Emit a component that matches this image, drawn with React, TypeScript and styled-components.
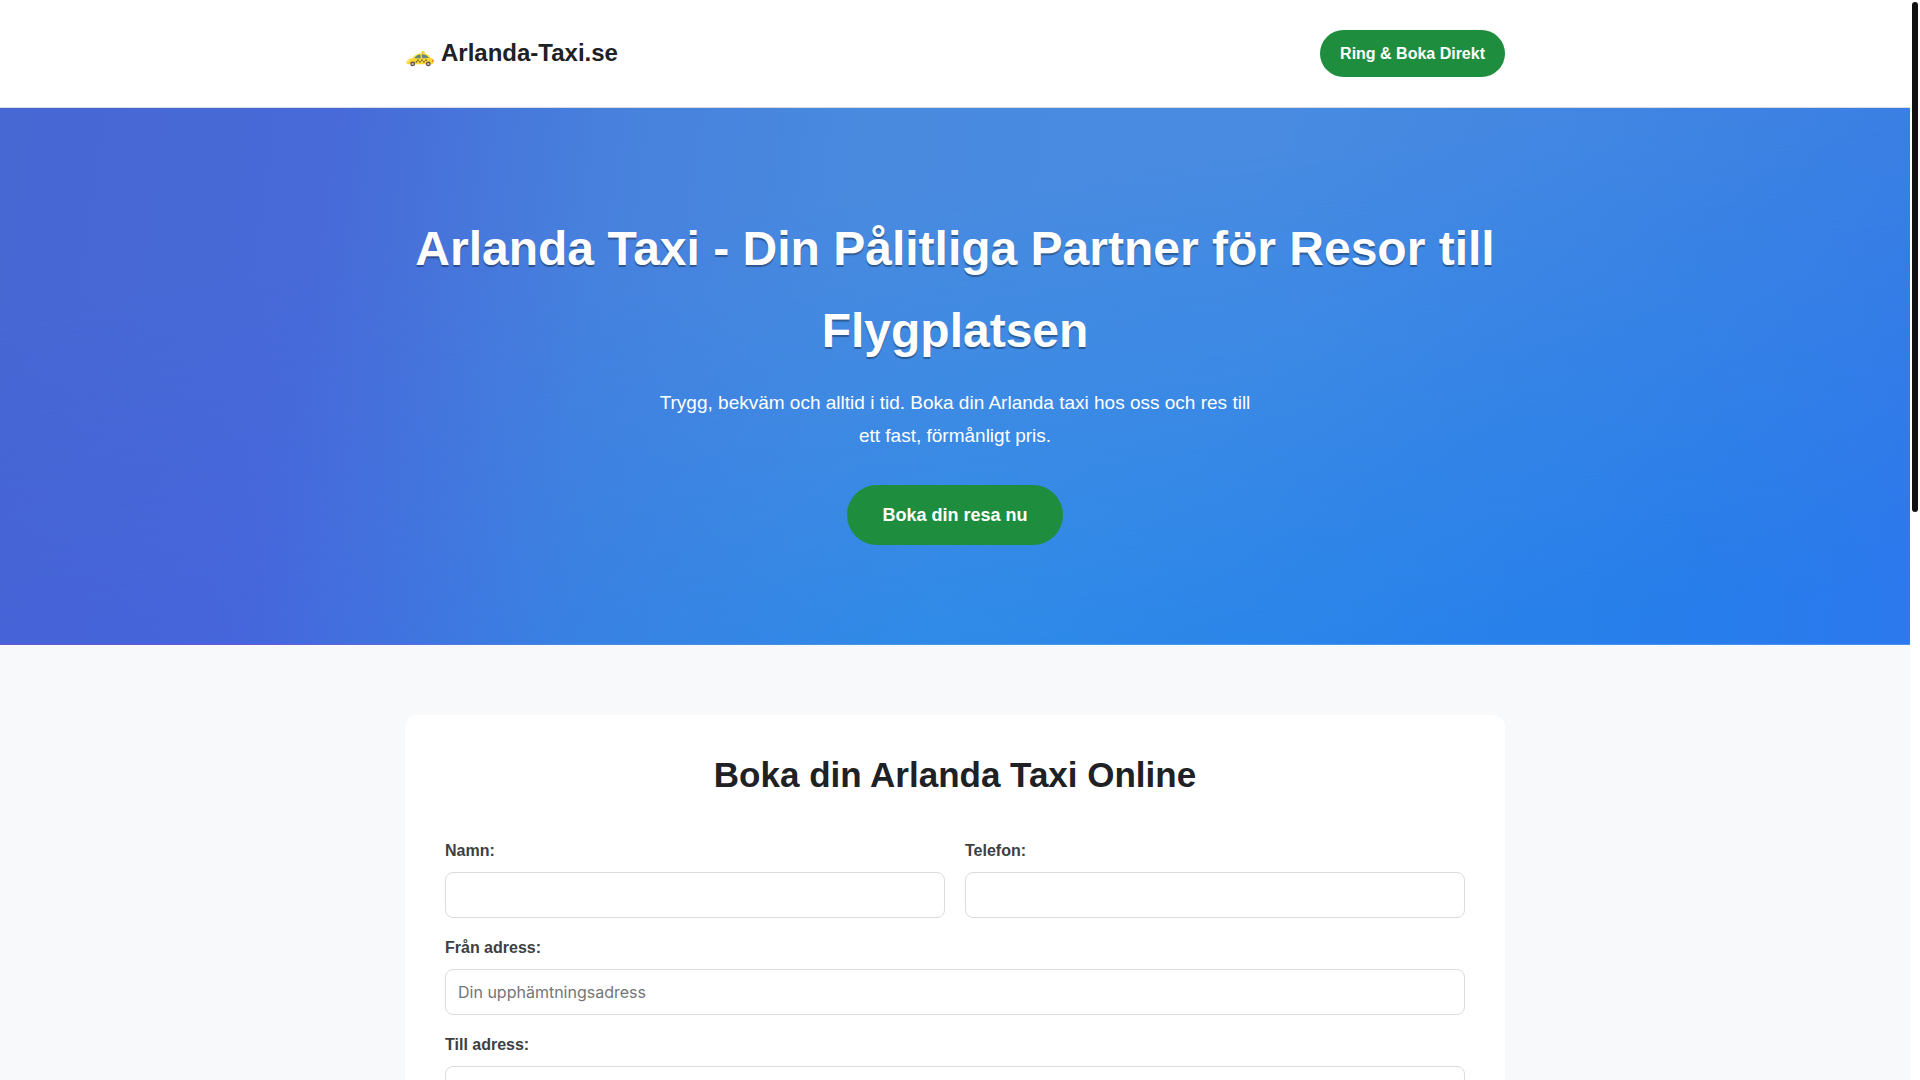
import React from 'react';
import styled, { createGlobalStyle } from 'styled-components';

const GlobalStyle = createGlobalStyle`
  *, *::before, *::after { box-sizing: border-box; }
  html { height: 100%; overflow: hidden; }
  body {
    height: 100%;
    margin: 0;
    overflow: hidden;
    background: #fff;
    color: #202124;
    font-family: "Liberation Sans", Arial, sans-serif;
    font-size: 16px;
    line-height: 27px;
  }
  #root { height: 100%; }
`;

const Viewport = styled.div`
  display: flex;
  height: 100%;
`;

const Page = styled.div`
  flex: 1;
  min-width: 0;
  height: 100%;
  overflow: hidden;
  background: #f8f9fb;
`;

const ScrollTrack = styled.div`
  width: 10px;
  padding: 2px;
  background: #fff;
`;

const ScrollThumb = styled.div`
  width: 6px;
  height: 510px;
  border-radius: 3px;
  background: #111;
`;

const Container = styled.div`
  width: 100%;
  max-width: 1100px;
  margin: 0 auto;
`;

const Header = styled.header`
  padding: 30px 0;
  background: #fff;
  border-bottom: 1px solid #dadce0;
`;

const HeaderRow = styled(Container)`
  display: flex;
  align-items: center;
  justify-content: space-between;
`;

const Logo = styled.a`
  display: flex;
  align-items: center;
  gap: 6px;
  padding-bottom: 2px;
  color: #202124;
  font-size: 24px;
  font-weight: 700;
  line-height: 41px;
  text-decoration: none;
`;

const TaxiIcon = styled.svg`
  width: 30px;
  height: 30px;
`;

const Pill = styled.a<{ $large?: boolean }>`
  display: inline-block;
  padding: ${(p) => (p.$large ? '15px 35px' : '10px 20px')};
  border-radius: ${(p) => (p.$large ? '30px' : '25px')};
  background: #1e8e3e;
  color: #fff;
  font-size: ${(p) => (p.$large ? '18px' : '16px')};
  font-weight: 700;
  line-height: ${(p) => (p.$large ? '30px' : '27px')};
  text-decoration: none;
`;

const Hero = styled.section`
  position: relative;
  isolation: isolate;
  padding: 100px 0;
  color: #fff;
  text-align: center;
  background:
    linear-gradient(90deg, #7a50cc 0%, #7a54d0 14%, #4a8ae4 30%, #4a9cea 55%, #4a90ec 100%) bottom / 100% 1px no-repeat,
    linear-gradient(95deg, #4761d8 0%, #4664de 14%, #3f72e1 22%, #3482e5 32%, #2c8be9 50%, #2a86ea 66%, #277eeb 88%, #2c79ee 100%);

  &::before {
    content: '';
    position: absolute;
    inset: 0;
    z-index: -1;
    background: linear-gradient(98deg, #4767d3 0%, #476ad8 17%, #4781dd 31%, #498adf 44%, #488be1 64%, #4084e2 86%, #3a7ee2 100%);
    mask-image: linear-gradient(173deg, #000 26%, transparent 92%);
  }
`;

const HeroTitle = styled.h1`
  margin: 0 0 14px;
  font-size: 48px;
  font-weight: 700;
  line-height: 82px;
  text-shadow: 0 2px 1px rgba(0, 0, 0, 0.35);
`;

const HeroText = styled.p`
  max-width: 600px;
  margin: 0 auto 33px;
  font-size: 19px;
  line-height: 33px;
`;

const Booking = styled.section`
  padding: 70px 0;
`;

const Card = styled(Container)`
  padding: 40px;
  border-radius: 12px;
  background: #fff;
`;

const CardTitle = styled.h2`
  margin: 0 0 42px;
  font-size: 35px;
  font-weight: 700;
  line-height: 40px;
  text-align: center;
`;

const Form = styled.form`
  display: grid;
  grid-template-columns: 1fr 1fr;
  gap: 16px 20px;
`;

const Field = styled.div<{ $wide?: boolean }>`
  display: flex;
  flex-direction: column;
  gap: 8px;
  grid-column: ${(p) => (p.$wide ? '1 / -1' : 'auto')};
`;

const Label = styled.label`
  color: #3c4043;
  font-weight: 700;
`;

const Input = styled.input`
  width: 100%;
  height: 46px;
  padding: 12px;
  border: 1px solid #dadce0;
  border-radius: 8px;
  background: #fff;
  color: #202124;
  font-family: Inter, sans-serif;
  font-size: 16px;

  &::placeholder { color: #757575; }
`;

const fields = [
  { id: 'name', label: 'Namn:', type: 'text', wide: false, placeholder: '' },
  { id: 'phone', label: 'Telefon:', type: 'tel', wide: false, placeholder: '' },
  { id: 'from', label: 'Från adress:', type: 'text', wide: true, placeholder: 'Din upphämtningsadress' },
  { id: 'to', label: 'Till adress:', type: 'text', wide: true, placeholder: '' },
];

function Taxi() {
  return (
    <TaxiIcon viewBox="0 0 30 30" aria-hidden="true">
      <rect x="16.3" y="13" width="3.400" height="3.500" rx="0.800" fill="#fbd035" />
      <path d="M1.800 22.500c.2-1.300 1.700-1.900 5.700-2.300 2.500-3 4.500-4.600 8-4.600h3c3.600 0 5 1.300 7.200 4.200 2 .5 2.800 1.600 2.800 3.600v1.300c0 1-.6 1.500-1.700 1.500H3.200c-1.200 0-1.700-.4-1.700-1.400z" fill="#fdd835" />
      <path d="M9.300 20.300c1.800-2.300 3.400-3.500 6-3.700l.5 3.700z" fill="#5f8788" />
      <path d="M16.700 16.500h1.600c2.700 0 3.900 1.200 5.500 3.600l-6.600.2z" fill="#5f8788" />
      <path d="M12.200 21.600h1.500v1.500h-1.500zM16.200 21.600h1.500v1.500h-1.500zM20.200 21.600h1.500v1.500h-1.500zM10.700 23.100h1.500v1.300h-1.500zM14.200 23.100h1.500v1.300h-1.500zM18.200 23.100h1.500v1.300h-1.500z" fill="#6a5a32" />
      <path d="M1.900 21.900l2.500-.8-.6 1.600-2 .5z" fill="#fff7d6" />
      <path d="M27.500 21l1 1v1.900h-1z" fill="#e5533d" />
      <circle cx="7.700" cy="25.900" r="2.400" fill="#594b4b" />
      <circle cx="7.700" cy="25.900" r="1.200" fill="#c2bcbc" />
      <circle cx="23.300" cy="25.900" r="2.400" fill="#594b4b" />
      <circle cx="23.300" cy="25.900" r="1.200" fill="#c2bcbc" />
    </TaxiIcon>
  );
}

export default function App() {
  return (
    <>
      <GlobalStyle />
      <Viewport>
        <Page>
          <Header>
            <HeaderRow>
              <Logo href="#">
                <Taxi />
                Arlanda-Taxi.se
              </Logo>
              <Pill href="#">Ring &amp; Boka Direkt</Pill>
            </HeaderRow>
          </Header>
          <Hero>
            <Container>
              <HeroTitle>Arlanda Taxi - Din Pålitliga Partner för Resor till Flygplatsen</HeroTitle>
              <HeroText>Trygg, bekväm och alltid i tid. Boka din Arlanda taxi hos oss och res till ett fast, förmånligt pris.</HeroText>
              <Pill $large href="#booking">Boka din resa nu</Pill>
            </Container>
          </Hero>
          <Booking id="booking">
            <Card>
              <CardTitle>Boka din Arlanda Taxi Online</CardTitle>
              <Form>
                {fields.map((f) => (
                  <Field key={f.id} $wide={f.wide}>
                    <Label htmlFor={f.id}>{f.label}</Label>
                    <Input id={f.id} type={f.type} placeholder={f.placeholder} />
                  </Field>
                ))}
              </Form>
            </Card>
          </Booking>
        </Page>
        <ScrollTrack>
          <ScrollThumb />
        </ScrollTrack>
      </Viewport>
    </>
  );
}
